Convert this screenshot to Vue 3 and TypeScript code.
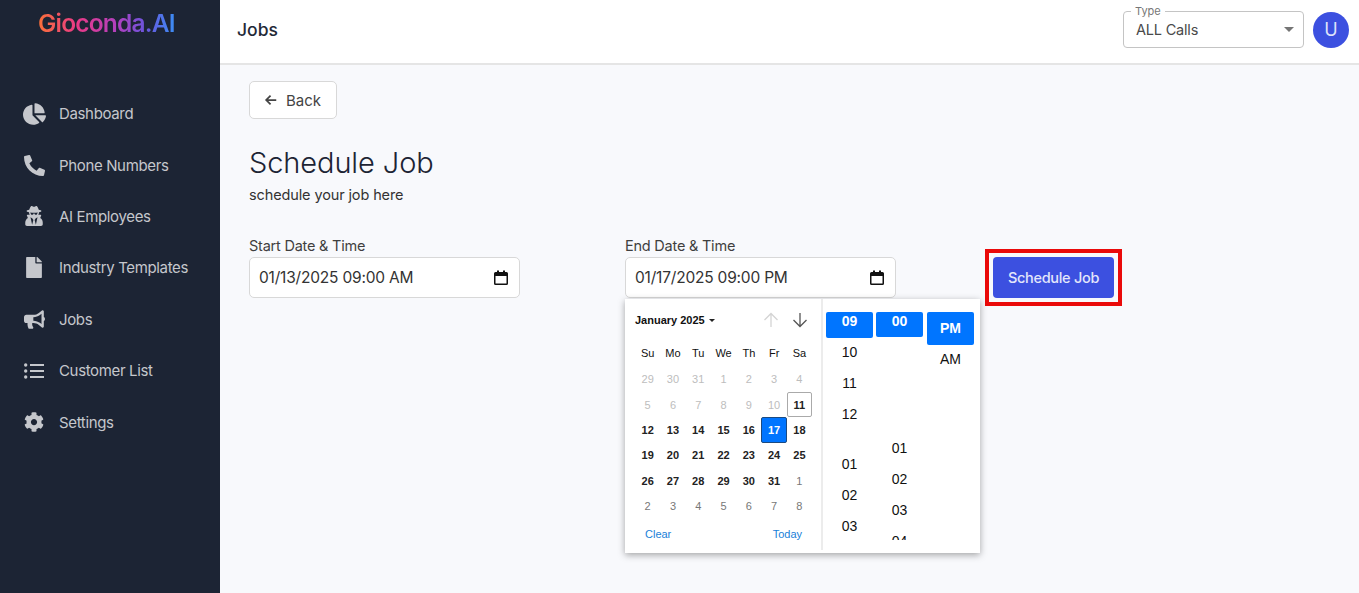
<script setup lang="ts">
interface NavItem {
  label: string
  box: string
  w: number
  h: number
  path: string
}

const nav: NavItem[] = [
  { label: 'Dashboard', box: '0 0 544 512', w: 23, h: 22, path: 'M527.79 288H290.5l158.03 158.03c6.04 6.04 15.98 6.53 22.19.68 38.7-36.46 65.32-85.61 73.13-140.86 1.34-9.46-6.51-17.85-16.06-17.85zm-15.83-64.8C503.72 103.74 408.26 8.28 288.8.04 279.68-.59 272 7.1 272 16.24V240h223.77c9.14 0 16.82-7.68 16.19-16.8zM224 288V50.71c0-9.55-8.39-17.4-17.84-16.06C86.99 51.49-4.1 155.6.14 280.37 4.5 408.51 114.83 513.59 243.03 511.98c50.4-.63 96.97-16.87 135.26-44.03 7.9-5.6 8.42-17.23 1.57-24.08L224 288z' },
  { label: 'Phone Numbers', box: '0 0 512 512', w: 21, h: 21, path: 'M497.39 361.8l-112-48a24 24 0 0 0-28 6.9l-49.6 60.6A370.66 370.66 0 0 1 130.6 204.11l60.6-49.6a23.94 23.94 0 0 0 6.9-28l-48-112A24.16 24.16 0 0 0 122.6.61l-104 24A24 24 0 0 0 0 48c0 256.5 207.9 464 464 464a24 24 0 0 0 23.4-18.6l24-104a24.29 24.29 0 0 0-14.01-27.6z' },
  { label: 'AI Employees', box: '0 0 448 512', w: 18, h: 20, path: 'M383.9 308.3l23.9-62.6c4-10.5-3.7-21.7-15-21.7h-58.5c11-18.9 17.8-40.6 17.8-64v-.3c39.2-7.8 64-19.1 64-31.7 0-13.3-27.3-25.1-70.1-33-9.2-32.8-27-65.8-40.6-82.8-9.5-11.9-25.9-15.6-39.5-8.8l-27.6 13.8c-9 4.5-19.6 4.5-28.6 0L182.1 3.4c-13.6-6.8-30-3.1-39.5 8.8-13.5 17-31.4 50-40.6 82.8-42.7 7.9-70 19.7-70 33 0 12.6 24.8 23.9 64 31.7v.3c0 23.4 6.8 45.1 17.8 64H56.3c-11.5 0-19.2 11.7-14.7 22.3l25.8 60.2C27.3 329.8 0 372.7 0 422.4v44.8C0 491.9 20.1 512 44.8 512h358.4c24.7 0 44.8-20.1 44.8-44.8v-44.8c0-48.4-25.8-90.4-64.1-114.1zM176 480l-41.6-192 49.6 32 24 40-32 120zm96 0l-32-120 24-40 49.6-32L272 480zm41.7-298.5c-3.9 11.9-7 24.6-16.5 33.4-10.1 9.3-48 22.4-64-25-2.8-8.4-15.4-8.4-18.3 0-17 50.2-56 32.4-64 25-9.5-8.8-12.7-21.5-16.5-33.4-.8-2.5-6.3-5.7-6.3-5.8v-10.8c28.3 3.6 61 5.8 96 5.8s67.7-2.1 96-5.8v10.8c-.1.1-5.6 3.2-6.4 5.8z' },
  { label: 'Industry Templates', box: '0 0 384 512', w: 16, h: 21, path: 'M224 136V0H24C10.7 0 0 10.7 0 24v464c0 13.3 10.7 24 24 24h336c13.3 0 24-10.7 24-24V160H248c-13.2 0-24-10.8-24-24zm160-14.1v6.1H256V0h6.1c6.4 0 12.5 2.5 17 7l97.9 98c4.5 4.5 7 10.6 7 16.9z' },
  { label: 'Jobs', box: '0 0 576 512', w: 21, h: 19, path: 'M576 240c0-23.63-12.95-44.04-32-55.12V32.01C544 23.26 537.02 0 512 0c-7.12 0-14.19 2.38-19.98 7.02l-85.03 68.03C364.28 109.19 310.66 128 256 128H64c-35.35 0-64 28.65-64 64v96c0 35.35 28.65 64 64 64h33.7c-1.39 10.48-2.18 21.14-2.18 32 0 39.77 9.26 77.35 25.56 110.94 5.19 10.69 16.52 17.06 28.4 17.06h74.28c26.05 0 41.69-29.84 25.9-50.56-16.4-21.52-26.15-48.36-26.15-77.44 0-11.11 1.62-21.79 4.41-32H256c54.66 0 108.28 18.81 150.98 52.95l85.03 68.03a32.023 32.023 0 0 0 19.98 7.02c24.92 0 32-22.78 32-32V295.13C563.05 284.04 576 263.63 576 240zm-96 141.42l-33.05-26.44C392.95 311.78 325.12 288 256 288v-96c69.12 0 136.95-23.78 190.95-66.98L480 98.58v282.84z' },
  { label: 'Customer List', box: '0 0 20 16', w: 20, h: 16, path: 'M0 2a1.7 1.7 0 1 0 3.4 0a1.7 1.7 0 1 0-3.4 0zM0 8a1.7 1.7 0 1 0 3.4 0a1.7 1.7 0 1 0-3.4 0zM0 14a1.7 1.7 0 1 0 3.4 0a1.7 1.7 0 1 0-3.4 0zM6 .9h14v2.2H6zM6 6.9h14v2.2H6zM6 12.9h14v2.2H6z' },
  { label: 'Settings', box: '0 0 512 512', w: 20, h: 20, path: 'M487.4 315.7l-42.6-24.6c4.3-23.2 4.3-47 0-70.2l42.6-24.6c4.9-2.8 7.1-8.6 5.5-14-11.1-35.6-30-67.8-54.7-94.6-3.8-4.1-10-5.1-14.8-2.3L380.8 110c-17.9-15.4-38.5-27.3-60.8-35.1V25.8c0-5.6-3.9-10.5-9.4-11.7-36.7-8.2-74.3-7.8-109.2 0-5.5 1.2-9.4 6.1-9.4 11.7V75c-22.2 7.9-42.8 19.8-60.8 35.1L88.7 85.5c-4.9-2.8-11-1.9-14.8 2.3-24.7 26.7-43.6 58.9-54.7 94.6-1.7 5.4.6 11.2 5.5 14L67.3 221c-4.3 23.2-4.3 47 0 70.2l-42.6 24.6c-4.9 2.8-7.1 8.6-5.5 14 11.1 35.6 30 67.8 54.7 94.6 3.8 4.1 10 5.1 14.8 2.3l42.6-24.6c17.9 15.4 38.5 27.3 60.8 35.1v49.2c0 5.6 3.9 10.5 9.4 11.7 36.7 8.2 74.3 7.8 109.2 0 5.5-1.2 9.4-6.1 9.4-11.7v-49.2c22.2-7.9 42.8-19.8 60.8-35.1l42.6 24.6c4.9 2.8 11 1.9 14.8-2.3 24.7-26.7 43.6-58.9 54.7-94.6 1.5-5.5-.7-11.3-5.6-14.1zM256 336c-44.1 0-80-35.9-80-80s35.9-80 80-80 80 35.9 80 80-35.9 80-80 80z' }
]

const weekdays = ['Su', 'Mo', 'Tu', 'We', 'Th', 'Fr', 'Sa']

// Dec 29 .. Feb 8, "off" = before today, "next" = next month
const days = Array.from({ length: 42 }, (_, i) => {
  const n = i - 2
  if (n < 1) return { label: 29 + i, cls: 'off' }
  if (n > 31) return { label: n - 31, cls: 'next' }
  return { label: n, cls: n < 11 ? 'off' : n === 11 ? 'today' : n === 17 ? 'picked' : '' }
})

const hours = ['10', '11', '12', '', '01', '02', '03']
const minutes = ['01', '02', '03', '04']
</script>

<template>
  <div class="page">
    <aside class="sidebar">
      <div class="logo">Gioconda.AI</div>
      <nav class="menu">
        <a v-for="item in nav" :key="item.label" class="menu-item">
          <span class="menu-icon">
            <svg :viewBox="item.box" :width="item.w" :height="item.h">
              <path :d="item.path" fill="currentColor" />
            </svg>
          </span>
          <span>{{ item.label }}</span>
        </a>
      </nav>
    </aside>

    <div class="body">
      <header class="topbar">
        <h2 class="topbar-title">Jobs</h2>
        <div class="topbar-right">
          <div class="type-select">
            <span class="type-label">Type</span>
            <span class="type-value">ALL Calls</span>
            <span class="caret"></span>
          </div>
          <div class="avatar">U</div>
        </div>
      </header>

      <main class="content">
        <button class="back" type="button">
          <svg viewBox="0 0 16 16" width="14" height="14">
            <path d="M14 8H3M7.5 3L2.5 8l5 5" fill="none" stroke="currentColor" stroke-width="2" />
          </svg>
          Back
        </button>
        <h1 class="title">Schedule Job</h1>
        <p class="subtitle">schedule your job here</p>

        <div class="form">
          <div class="field">
            <label>Start Date &amp; Time</label>
            <div class="date-input">
              <span>01/13/2025 09:00 AM</span>
              <svg viewBox="0 0 14 16" width="14" height="16">
                <path d="M3 .5h2V2h4V.5h2V2h1.5A1.5 1.5 0 0 1 14 3.5v10a1.5 1.5 0 0 1-1.5 1.5h-11A1.5 1.5 0 0 1 0 13.5v-10A1.5 1.5 0 0 1 1.5 2H3zM1.5 6v7.5h11V6z" fill="#111" fill-rule="evenodd" />
              </svg>
            </div>
          </div>

          <div class="field">
            <label>End Date &amp; Time</label>
            <div class="date-input">
              <span>01/17/2025 09:00 PM</span>
              <svg viewBox="0 0 14 16" width="14" height="16">
                <path d="M3 .5h2V2h4V.5h2V2h1.5A1.5 1.5 0 0 1 14 3.5v10a1.5 1.5 0 0 1-1.5 1.5h-11A1.5 1.5 0 0 1 0 13.5v-10A1.5 1.5 0 0 1 1.5 2H3zM1.5 6v7.5h11V6z" fill="#111" fill-rule="evenodd" />
              </svg>
            </div>

            <div class="picker">
              <div class="calendar">
                <div class="cal-head">
                  <span class="month">January 2025 <i class="month-caret"></i></span>
                  <div class="cal-arrows">
                    <svg viewBox="0 0 16 16" width="16" height="16"><path d="M8 15V1.5M1.5 8L8 1.5 14.5 8" fill="none" stroke="#d4d4d4" stroke-width="1.3" /></svg>
                    <svg viewBox="0 0 16 16" width="16" height="16"><path d="M8 1v13.5M1.5 8L8 14.5 14.5 8" fill="none" stroke="#555" stroke-width="1.3" /></svg>
                  </div>
                </div>
                <div class="cal-grid">
                  <span v-for="w in weekdays" :key="w" class="wd">{{ w }}</span>
                  <span v-for="(d, i) in days" :key="i" class="day" :class="d.cls">{{ d.label }}</span>
                </div>
                <div class="cal-foot">
                  <span>Clear</span>
                  <span>Today</span>
                </div>
              </div>

              <div class="times">
                <div class="time-col">
                  <div class="cell sel hour-sel">09</div>
                  <div v-for="(h, i) in hours" :key="i" class="cell hour" :class="{ blank: !h }">{{ h }}</div>
                </div>
                <div class="time-col">
                  <div class="cell sel min-sel">00</div>
                  <div class="min-list">
                    <div v-for="m in minutes" :key="m" class="cell minute">{{ m }}</div>
                  </div>
                </div>
                <div class="time-col ampm-col">
                  <div class="cell sel ampm-sel">PM</div>
                  <div class="cell ampm">AM</div>
                </div>
              </div>
            </div>
          </div>

          <div class="action">
            <button class="submit" type="button">Schedule Job</button>
          </div>
        </div>
      </main>
    </div>
  </div>
</template>

<style>
html, body {
  margin: 0;
  height: 100%;
  overflow: hidden;
}
</style>

<style scoped>
.page {
  display: flex;
  width: 1359px;
  height: 593px;
  overflow: hidden;
  font-family: Inter, "Noto Sans", sans-serif;
  color: #1c2434;
}
.sidebar {
  width: 220px;
  flex: none;
  background: #1c2434;
  color: #c5c7cc;
}
.logo {
  width: 138px;
  margin: 8px 0 0 38px;
  height: 30px;
  line-height: 30px;
  font-size: 24.5px;
  font-weight: 600;
  letter-spacing: -0.8px;
  white-space: nowrap;
  background: linear-gradient(90deg, #f97038 0%, #ea3a86 28%, #b040c0 58%, #6a55dd 78%, #3a8ff5 100%);
  -webkit-background-clip: text;
  background-clip: text;
  color: transparent;
}
.menu {
  display: flex;
  flex-direction: column;
  margin-top: 50px;
}
.menu-item {
  display: flex;
  align-items: center;
  height: 51.4px;
  font-size: 15px;
  letter-spacing: -0.35px;
  white-space: nowrap;
}
.menu-icon {
  width: 24px;
  margin: 0 13px 0 22px;
  display: flex;
  justify-content: center;
}
.body {
  flex: 1;
  min-width: 0;
  display: flex;
  flex-direction: column;
  background: #f8f9fc;
}
.topbar {
  height: 59px;
  flex: none;
  display: flex;
  align-items: center;
  justify-content: space-between;
  padding: 0 10px 4px 17px;
  background: #fff;
  border-bottom: 2px solid #e5e5e5;
}
.topbar-title {
  margin: 0;
  font-size: 17.5px;
  font-weight: 500;
  color: #1f2937;
}
.topbar-right {
  display: flex;
  align-items: center;
  gap: 9px;
}
.type-select {
  position: relative;
  box-sizing: border-box;
  width: 181px;
  height: 37px;
  display: flex;
  align-items: center;
  padding: 0 12px;
  border: 1px solid #c4c4c4;
  border-radius: 4px;
}
.type-label {
  position: absolute;
  top: -7px;
  left: 7px;
  padding: 0 4px;
  background: #fff;
  font-size: 11px;
  line-height: 12px;
  color: #777;
}
.type-value {
  font-size: 14.5px;
  letter-spacing: -0.2px;
  color: #4a4a4a;
}
.caret {
  margin-left: auto;
  margin-right: -3px;
  border-left: 5px solid transparent;
  border-right: 5px solid transparent;
  border-top: 5px solid #757575;
}
.avatar {
  width: 36px;
  height: 36px;
  border-radius: 50%;
  background: #3c50e0;
  color: #dfe3fb;
  font-size: 18px;
  display: flex;
  align-items: center;
  justify-content: center;
}
.content {
  flex: 1;
  padding: 16px 29px 0;
}
.back {
  display: flex;
  align-items: center;
  gap: 8px;
  box-sizing: border-box;
  width: 88px;
  height: 38px;
  padding: 0 0 0 14px;
  background: #fff;
  border: 1px solid #d8d8d8;
  border-radius: 5px;
  font: inherit;
  font-size: 15px;
  color: #444;
}
.title {
  margin: 26px 0 0;
  font-size: 29px;
  line-height: 36px;
  font-weight: 300;
  letter-spacing: -0.1px;
  color: #1c2434;
}
.subtitle {
  margin: 4px 0 0;
  font-size: 14.5px;
  line-height: 20px;
  letter-spacing: -0.12px;
  color: #333;
}
.form {
  display: flex;
  margin-top: 31px;
}
.field {
  position: relative;
  width: 271px;
  margin-right: 105px;
}
.field:nth-child(2) {
  margin-right: 89px;
}
.field label {
  display: block;
  height: 20px;
  line-height: 20px;
  font-size: 14.5px;
  letter-spacing: -0.22px;
  color: #3f3f3f;
  margin-bottom: 1px;
}
.date-input {
  box-sizing: border-box;
  height: 41px;
  display: flex;
  align-items: center;
  justify-content: space-between;
  padding: 0 11px 0 9px;
  background: #fff;
  border: 1px solid #d8d8d8;
  border-radius: 5px;
  font-size: 15.5px;
  letter-spacing: -0.2px;
  color: #333;
}
.action {
  width: 137px;
  height: 57px;
  box-sizing: border-box;
  border: 4px solid #ea0a0a;
  margin-top: 13px;
  padding: 4px;
  display: flex;
  justify-content: center;
}
.submit {
  width: 122px;
  height: 41px;
  border: none;
  border-radius: 4px;
  background: #3c50e0;
  color: #e3e6fb;
  font: inherit;
  font-size: 14.5px;
  font-weight: 500;
  letter-spacing: -0.3px;
  padding: 0;
}
.picker {
  position: absolute;
  top: 63px;
  left: 0;
  width: 355px;
  height: 254px;
  display: flex;
  background: #fff;
  box-shadow: 0 2px 7px rgba(0, 0, 0, 0.35);
  font-family: "Liberation Sans", Arial, sans-serif;
  color: #111;
  z-index: 2;
}
.calendar {
  box-sizing: border-box;
  width: 198px;
  padding: 0 10px;
  border-right: 2px solid #ececec;
  margin-bottom: 3px;
}
.cal-head {
  box-sizing: border-box;
  height: 39.5px;
  padding: 2px 3px 0 0;
  display: flex;
  align-items: center;
  justify-content: space-between;
}
.month {
  font-size: 11px;
  font-weight: 700;
}
.month-caret {
  display: inline-block;
  margin-left: 1px;
  vertical-align: 2px;
  border-left: 3.5px solid transparent;
  border-right: 3.5px solid transparent;
  border-top: 3.5px solid #222;
}
.cal-arrows {
  display: flex;
  gap: 13px;
}
.cal-grid {
  display: grid;
  grid-template-columns: repeat(7, 25.3px);
  grid-template-rows: 28px;
  grid-auto-rows: 25.4px;
  font-size: 11px;
}
.wd, .day {
  display: flex;
  align-items: center;
  justify-content: center;
  box-sizing: border-box;
}
.day {
  font-weight: 700;
  color: #222;
}
.day.off {
  font-weight: 400;
  color: #bdbdbd;
}
.day.next {
  font-weight: 400;
  color: #777;
}
.day.today {
  border: 1px solid #aaa;
  border-radius: 2px;
}
.day.picked {
  background: #0075ff;
  border: 1px solid #1c4a80;
  border-radius: 2px;
  color: #fff;
}
.cal-foot {
  display: flex;
  justify-content: space-between;
  padding: 9px 9px 0 10px;
  font-size: 11px;
  color: #1a7fd9;
}
.times {
  box-sizing: border-box;
  flex: 1;
  display: flex;
  gap: 3px;
  height: 241px;
  overflow: hidden;
  padding: 13px 5px 0 3px;
  font-size: 14px;
}
.time-col {
  width: 47px;
  text-align: center;
}
.ampm-col {
  margin-left: 1px;
}
.cell {
  box-sizing: border-box;
}
.sel {
  background: #0075ff;
  color: #fff;
  font-weight: 700;
  border-radius: 2px;
}
.hour-sel {
  height: 26px;
  line-height: 18px;
  margin-bottom: -1px;
}
.min-sel {
  height: 25px;
  line-height: 18px;
}
.ampm-sel {
  height: 33px;
  line-height: 33px;
}
.hour {
  height: 30.8px;
  line-height: 30.8px;
}
.hour.blank {
  height: 20px;
}
.minute {
  height: 31px;
  line-height: 31px;
}
.min-list {
  margin-top: 96px;
}
.ampm {
  height: 28px;
  line-height: 28px;
}
</style>
